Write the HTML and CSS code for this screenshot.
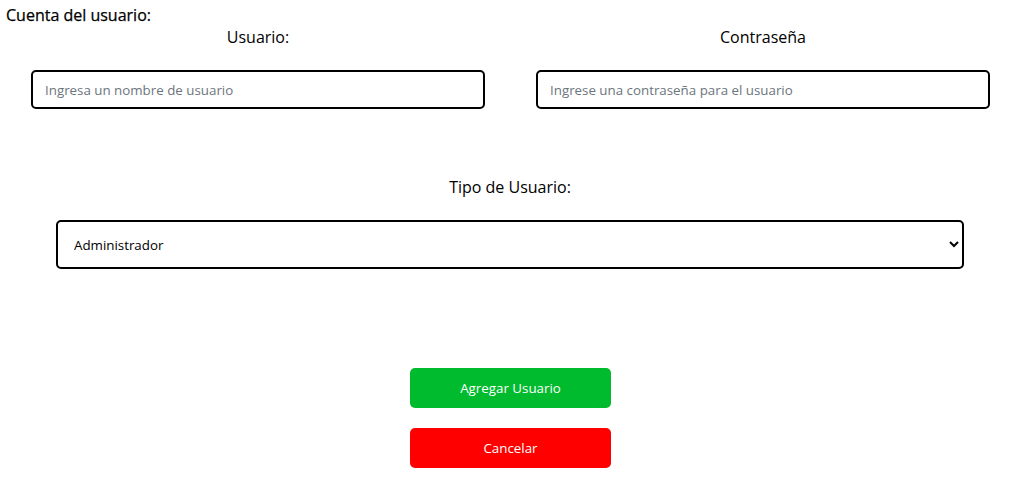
FILE: index.html
```html
<!DOCTYPE html>
<html lang="es">
<head>
<meta charset="utf-8">
<title>Cuenta del usuario</title>
<link rel="stylesheet" href="styles.css">
</head>
<body>
<form class="form">
  <h2 class="title">Cuenta del usuario:</h2>
  <div class="row">
    <div class="field">
      <label class="label" for="user">Usuario:</label>
      <input class="input" id="user" type="text" placeholder="Ingresa un nombre de usuario">
    </div>
    <div class="field">
      <label class="label" for="pass">Contraseña</label>
      <input class="input" id="pass" type="password" placeholder="Ingrese una contraseña para el usuario">
    </div>
  </div>
  <div class="type">
    <label class="label" for="tipo">Tipo de Usuario:</label>
    <select class="select" id="tipo">
      <option>Administrador</option>
      <option>Usuario</option>
    </select>
  </div>
  <div class="actions">
    <button type="button" class="btn btn-add">Agregar Usuario</button>
    <button type="button" class="btn btn-cancel">Cancelar</button>
  </div>
</form>
</body>
</html>
```
FILE: styles.css
```css
html, body {
  margin: 0;
  padding: 0;
  background: #fff;
}
body {
  font-family: "Open Sans", "Liberation Sans", sans-serif;
  color: #000;
}
.form {
  display: flex;
  flex-direction: column;
}
.title {
  margin: 0;
  padding: 4px 0 0 6px;
  font-size: 16px;
  font-weight: 500;
  line-height: 22px;
  -webkit-text-stroke: 0.25px #000;
}
.row {
  display: flex;
  gap: 51px;
  padding-left: 31px;
}
.field {
  width: 454px;
  display: flex;
  flex-direction: column;
}
.label {
  font-size: 16px;
  line-height: 22px;
  text-align: center;
  color: #000;
}
.input {
  margin-top: 22px;
  box-sizing: border-box;
  height: 39px;
  width: 100%;
  border: 2px solid #000;
  border-radius: 5px;
  padding: 0 12px;
  font-family: inherit;
  font-size: 13.333px;
  outline: none;
}
.input::placeholder {
  color: #6c757d;
}
.type {
  margin-top: 67px;
  margin-left: 56px;
  width: 908px;
  display: flex;
  flex-direction: column;
}
.select {
  margin-top: 22px;
  box-sizing: border-box;
  height: 49px;
  width: 100%;
  border: 2px solid #000;
  border-radius: 5px;
  padding: 0 8px 0 12px;
  font-family: inherit;
  font-size: 13.333px;
  color: #000;
  background: #fff;
}
.actions {
  margin-top: 99px;
  margin-left: 410px;
  width: 201px;
  display: flex;
  flex-direction: column;
  gap: 20px;
}
.btn {
  height: 40px;
  border: none;
  border-radius: 5px;
  color: #fff;
  font-family: inherit;
  font-size: 13.333px;
  cursor: pointer;
}
.btn-add {
  background: #00bb2d;
}
.btn-cancel {
  background: #ff0000;
}
```
